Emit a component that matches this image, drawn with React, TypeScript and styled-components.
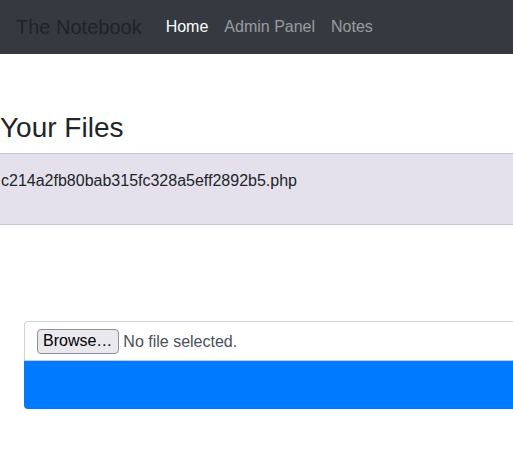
import React from "react";
import styled, { createGlobalStyle } from "styled-components";

const Global = createGlobalStyle`
  html, body { margin: 0; padding: 0; background: #fff; }
  body {
    font-family: "Liberation Sans", Arial, sans-serif;
    font-size: 16px;
    line-height: 1.5;
    color: #212529;
    overflow-x: hidden;
  }
  * { box-sizing: border-box; }
`;

const Navbar = styled.nav`
  height: 54px;
  background: #343a40;
  display: flex;
  align-items: center;
  padding: 0 16px;
`;

const Brand = styled.a`
  font-size: 20px;
  line-height: 30px;
  color: #1f2327;
  margin-right: 16px;
  text-decoration: none;
  white-space: nowrap;
`;

const NavList = styled.ul`
  display: flex;
  list-style: none;
  margin: 0;
  padding: 0;
`;

const NavLink = styled.a<{ $active?: boolean }>`
  display: block;
  padding: 8px;
  font-size: 16px;
  line-height: 24px;
  color: ${(p) => (p.$active ? "#ffffff" : "rgba(255,255,255,0.5)")};
  text-decoration: none;
`;

const Main = styled.main`
  padding-top: 57px;
  overflow: hidden;
`;

const Heading = styled.h3`
  margin: 0 0 8px;
  font-size: 28px;
  font-weight: 400;
  line-height: 1.2;
  color: #212529;
`;

const FileList = styled.div`
  background: #e4e1ec;
  border-top: 1px solid #c9c3d9;
  border-bottom: 1px solid #c9c3d9;
  padding: 15px 0 30px 1px;
  height: 72px;
`;

const FileName = styled.div`
  font-size: 16px;
  line-height: 24px;
  color: #212529;
`;

const UploadForm = styled.form`
  margin: 96px -40px 52px 24px;
  display: flex;
  flex-direction: column;
`;

const FileField = styled.div`
  height: 40px;
  border: 1px solid #ced4da;
  border-bottom-color: #c6cbd0;
  border-radius: 4px 0 0 0;
  padding: 7px 12px 0;
  display: flex;
  align-items: flex-start;
  gap: 4px;
  background: #fff;
`;

const BrowseButton = styled.span`
  display: inline-flex;
  align-items: center;
  height: 25px;
  padding: 0 6px 0 5px;
  background: #e9e9ed;
  border: 1px solid #8f8f9d;
  border-radius: 4px;
  font-size: 16px;
  line-height: 1;
  color: #000;
  white-space: nowrap;
`;

const NoFile = styled.span`
  font-size: 16px;
  line-height: 25px;
  color: #495057;
  white-space: nowrap;
`;

const SubmitButton = styled.button`
  height: 48px;
  border: none;
  background: #007bff;
  border-radius: 0 0 0 4px;
  color: #fff;
  font-family: inherit;
  font-size: 20px;
`;

export default function App() {
  return (
    <>
      <Global />
      <Navbar>
        <Brand href="#">The Notebook</Brand>
        <NavList>
          <li>
            <NavLink href="#" $active>
              Home
            </NavLink>
          </li>
          <li>
            <NavLink href="#">Admin Panel</NavLink>
          </li>
          <li>
            <NavLink href="#">Notes</NavLink>
          </li>
        </NavList>
      </Navbar>
      <Main>
        <Heading>Your Files</Heading>
        <FileList>
          <FileName>c214a2fb80bab315fc328a5eff2892b5.php</FileName>
        </FileList>
        <UploadForm onSubmit={(e) => e.preventDefault()}>
          <FileField>
            <BrowseButton>Browse…</BrowseButton>
            <NoFile>No file selected.</NoFile>
          </FileField>
          <SubmitButton type="submit" />
        </UploadForm>
      </Main>
    </>
  );
}
